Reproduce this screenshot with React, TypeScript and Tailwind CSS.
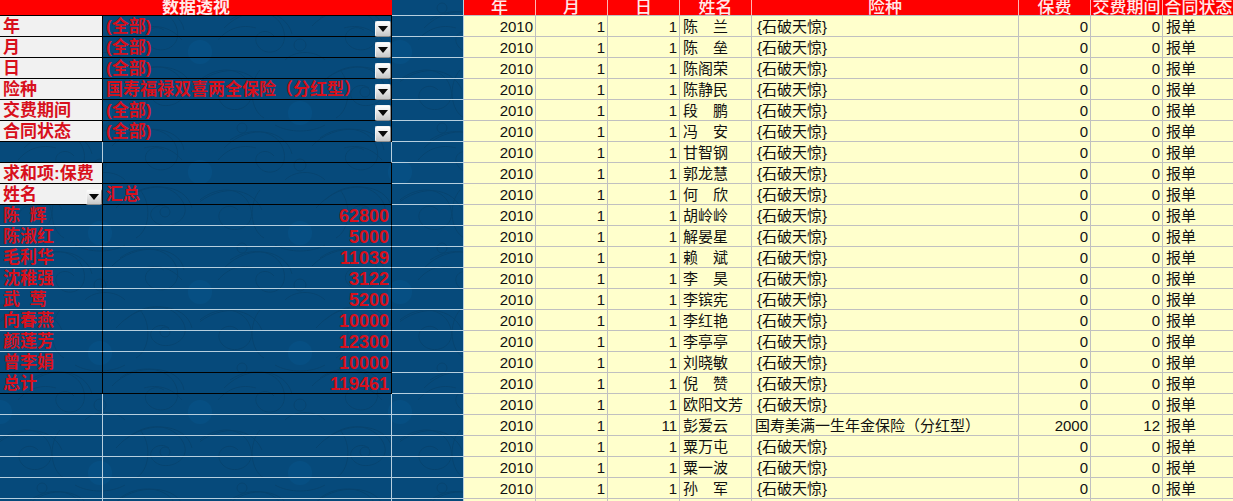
const filters = [
  { label: '年', value: '(全部)' },
  { label: '月', value: '(全部)' },
  { label: '日', value: '(全部)' },
  { label: '险种', value: '国寿福禄双喜两全保险（分红型）' },
  { label: '交费期间', value: '(全部)' },
  { label: '合同状态', value: '(全部)' },
];

const totals = [
  { name: '陈\u00a0\u00a0辉', sum: 62800 },
  { name: '陈淑红', sum: 5000 },
  { name: '毛利华', sum: 11039 },
  { name: '沈稚强', sum: 3122 },
  { name: '武\u00a0\u00a0莺', sum: 5200 },
  { name: '向春燕', sum: 10000 },
  { name: '颜莲芳', sum: 12300 },
  { name: '曾李娟', sum: 10000 },
];

const names = [
  '陈　兰', '陈　垒', '陈阁荣', '陈静民', '段　鹏', '冯　安', '甘智钢', '郭龙慧',
  '何　欣', '胡岭岭', '解晏星', '赖　斌', '李　昊', '李镔宪', '李红艳', '李亭亭',
  '刘晓敏', '倪　赞', '欧阳文芳', '彭爱云', '粟万屯', '粟一波', '孙　军',
];

const headers = ['年', '月', '日', '姓名', '险种', '保费', '交费期间', '合同状态'];

const gridCols = 'grid grid-cols-[72px_72px_72px_72px_267px_72px_72px_71px]';
const pivotRow = 'grid grid-cols-[103px_289px_72px] grid-rows-[21px] h-[21px]';

function DropButton() {
  return (
    <div className="w-4 h-4 shrink-0 self-end -mb-px flex items-center justify-center bg-gradient-to-b from-white to-[#c8c8c8] border-t border-l border-[#f4f4f4] border-r border-r-[#8f8f8f] border-b border-b-[#8f8f8f] rounded-[2px]">
      <svg width="10" height="6" viewBox="0 0 10 6">
        <path d="M0 0h10L5 6z" fill="#0a0a0a" />
      </svg>
    </div>
  );
}

function SwirlPattern() {
  return (
    <svg className="absolute inset-0 w-full h-full" aria-hidden="true">
      <defs>
        <pattern id="swirl" width="200" height="120" patternUnits="userSpaceOnUse">
          <rect width="200" height="120" fill="#064a7b" />
          <g fill="none" stroke="#05436f" strokeWidth="1">
            <path d="M-10 90c20-26 52-26 60-4s-18 30-28 18 6-24 16-14" />
            <path d="M-16 98c24-34 66-36 78-8" />
            <path d="M30 20c24-16 50-8 54 12s-18 26-26 14 8-20 16-10" />
            <path d="M24 28c26-26 62-18 68 6" />
            <path d="M120 18c18-14 48-12 56 8s-14 30-26 20 2-24 14-16" />
            <path d="M112 26c22-24 68-22 72 4" />
            <path d="M125 80c22-20 48-16 58 2s-16 30-28 20 4-22 14-14" />
            <path d="M116 88c26-30 70-26 76 0" />
            <path d="M60 70c-12 14-10 40 4 48M140 70c12 14 10 40-4 48" />
            <path d="M18 40c10-12 24-16 38-12M182 40c-10-12-24-16-38-12" />
            <path d="M85 60c10-10 30-10 40 0M75 5c14 8 36 8 50 0" />
            <circle cx="165" cy="92" r="5" />
            <circle cx="42" cy="8" r="5" />
            <circle cx="100" cy="45" r="6" />
          </g>
          <circle cx="0" cy="52" r="12" fill="#064f83" />
          <circle cx="200" cy="52" r="12" fill="#064f83" />
          <circle cx="100" cy="113" r="12" fill="#064f83" />
          <circle cx="100" cy="-7" r="12" fill="#064f83" />
        </pattern>
      </defs>
      <rect width="100%" height="100%" fill="url(#swirl)" />
    </svg>
  );
}

function PivotPanel() {
  const blankRows = [0, 1, 2, 3, 4, 5];
  return (
    <div className="relative w-[464px] shrink-0 border-r border-[#b7cfde] h-full overflow-hidden">
      <SwirlPattern />
      <div className="relative text-[#d8101c] font-bold text-[17px] leading-[22px]">
        {/* title */}
        <div className="grid grid-cols-[392px_72px] h-4">
          <div className="bg-[#ff0000] text-[#ffeaea] text-center leading-[15px] overflow-hidden border-b border-black">数据透视</div>
          <div className="border-b border-[#b7cfde]" />
        </div>

        {/* page filters */}
        {filters.map(f => (
          <div key={f.label} className={pivotRow}>
            <div className="bg-[#f1f1f1] pl-[3px] border-r border-black border-b overflow-hidden whitespace-nowrap">{f.label}</div>
            <div className="flex justify-between pl-[3px] border-r border-b border-black">
              <span className="whitespace-nowrap">{f.value}</span>
              <DropButton />
            </div>
            <div className="border-b border-[#b7cfde]" />
          </div>
        ))}

        {/* spacer row */}
        <div className={pivotRow}>
          <div className="border-r border-[#b7cfde] border-b border-b-black" />
          <div className="border-r border-[#b7cfde] border-b border-b-black" />
          <div className="border-b border-[#b7cfde]" />
        </div>

        {/* pivot head */}
        <div className={pivotRow}>
          <div className="bg-[#f1f1f1] pl-[3px] border-r border-b border-black whitespace-nowrap overflow-hidden">求和项:保费</div>
          <div className="border-r border-b border-black" />
          <div className="border-b border-[#b7cfde]" />
        </div>
        <div className={pivotRow}>
          <div className="flex justify-between bg-[#f1f1f1] pl-[3px] border-r border-b border-black">
            <span>姓名</span>
            <DropButton />
          </div>
          <div className="pl-[3px] border-r border-b border-black">汇总</div>
          <div className="border-b border-[#b7cfde]" />
        </div>

        {/* pivot body */}
        {totals.map((t, i) => (
          <div key={t.name} className={pivotRow}>
            <div className={`pl-[3px] border-r border-r-black border-b whitespace-nowrap ${i === totals.length - 1 ? 'border-b-black' : 'border-b-[#b7cfde]'}`}>{t.name}</div>
            <div className={`pr-[2px] text-right border-r border-r-black border-b text-[18px] ${i === totals.length - 1 ? 'border-b-black' : 'border-b-[#b7cfde]'}`}>{t.sum}</div>
            <div className="border-b border-[#b7cfde]" />
          </div>
        ))}
        <div className={pivotRow}>
          <div className="pl-[3px] border-r border-b border-black">总计</div>
          <div className="pr-[2px] text-right border-r border-b border-black text-[18px]">119461</div>
          <div className="border-b border-[#b7cfde]" />
        </div>

        {/* empty rows under the table */}
        {blankRows.map(i => (
          <div key={i} className={pivotRow}>
            <div className="border-r border-b border-[#b7cfde]" />
            <div className="border-r border-b border-[#b7cfde]" />
            <div className="border-b border-[#b7cfde]" />
          </div>
        ))}
      </div>
    </div>
  );
}

function DataSheet() {
  return (
    <div className="flex-1 h-full overflow-hidden bg-[#ffffcc] text-[#111] text-[15px]">
      <div className={`${gridCols} h-4 bg-[#ff0000] text-[#ffeaea] font-medium text-[17px] leading-[15px] border-b border-[#c0c0c0]`}>
        {headers.map(h => (
          <div key={h} className="text-center overflow-hidden whitespace-nowrap border-r border-[#ffb4b4] last:border-r-0">{h}</div>
        ))}
      </div>
      {names.concat('').map((name, i) => (
        <div key={i} className={`${gridCols} h-[21px] border-b border-[#c0c0c0] leading-[21px]`}>
          <div className="text-right pr-[2px] border-r border-[#c0c0c0]">{name && 2010}</div>
          <div className="text-right pr-[2px] border-r border-[#c0c0c0]">{name && 1}</div>
          <div className="text-right pr-[2px] border-r border-[#c0c0c0]">{name && (name === '彭爱云' ? 11 : 1)}</div>
          <div className="pl-[3px] border-r border-[#c0c0c0] whitespace-nowrap">{name}</div>
          <div className={`border-r border-[#c0c0c0] whitespace-nowrap ${name === '彭爱云' ? 'pl-[3px]' : 'pl-[5px]'}`}>
            {name && (name === '彭爱云' ? '国寿美满一生年金保险（分红型）' : '{石破天惊}')}
          </div>
          <div className="text-right pr-[2px] border-r border-[#c0c0c0]">{name && (name === '彭爱云' ? 2000 : 0)}</div>
          <div className="text-right pr-[2px] border-r border-[#c0c0c0]">{name && (name === '彭爱云' ? 12 : 0)}</div>
          <div className="pl-[3px]">{name && '报单'}</div>
        </div>
      ))}
    </div>
  );
}

export default function App() {
  return (
    <div className="flex w-[1233px] h-[501px] overflow-hidden font-['Liberation_Sans','Noto_Sans_CJK_SC',sans-serif]">
      <PivotPanel />
      <DataSheet />
    </div>
  );
}
